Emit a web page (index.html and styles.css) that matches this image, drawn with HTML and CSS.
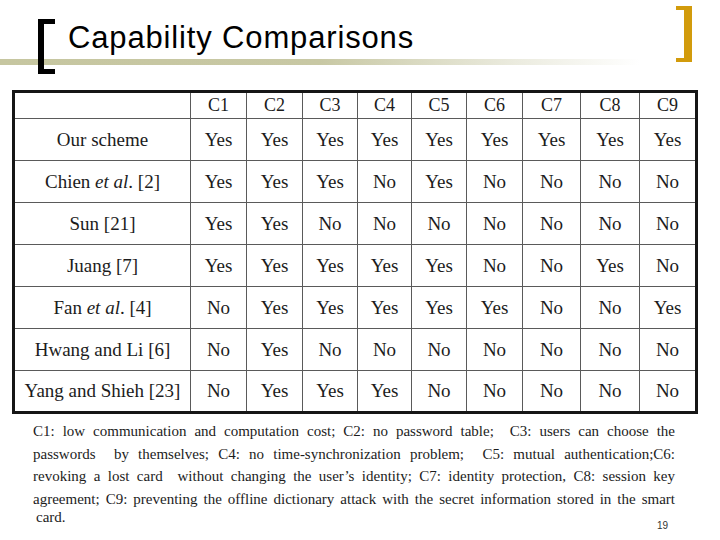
FILE: index.html
```html
<!DOCTYPE html>
<html lang="en">
<head>
<meta charset="utf-8">
<title>Capability Comparisons</title>
<link rel="stylesheet" href="styles.css">
</head>
<body>
<div class="slide">
  <header class="title-bar">
    <span class="br-left"></span>
    <h1 class="title">Capability Comparisons</h1>
    <span class="br-right"></span>
  </header>

  <table class="cmp">
    <colgroup>
      <col class="c-name"><col class="w56"><col class="w56"><col class="w55"><col class="w54"><col class="w55"><col class="w56"><col class="w58"><col class="w59"><col class="w55">
    </colgroup>
    <thead>
      <tr class="head"><th></th><th>C1</th><th>C2</th><th>C3</th><th>C4</th><th>C5</th><th>C6</th><th>C7</th><th>C8</th><th>C9</th></tr>
    </thead>
    <tbody>
      <tr><td>Our scheme</td><td>Yes</td><td>Yes</td><td>Yes</td><td>Yes</td><td>Yes</td><td>Yes</td><td>Yes</td><td>Yes</td><td>Yes</td></tr>
      <tr><td>Chien <i>et al</i>. [2]</td><td>Yes</td><td>Yes</td><td>Yes</td><td>No</td><td>Yes</td><td>No</td><td>No</td><td>No</td><td>No</td></tr>
      <tr><td>Sun [21]</td><td>Yes</td><td>Yes</td><td>No</td><td>No</td><td>No</td><td>No</td><td>No</td><td>No</td><td>No</td></tr>
      <tr><td>Juang [7]</td><td>Yes</td><td>Yes</td><td>Yes</td><td>Yes</td><td>Yes</td><td>No</td><td>No</td><td>Yes</td><td>No</td></tr>
      <tr><td>Fan <i>et al</i>. [4]</td><td>No</td><td>Yes</td><td>Yes</td><td>Yes</td><td>Yes</td><td>Yes</td><td>No</td><td>No</td><td>Yes</td></tr>
      <tr><td>Hwang and Li [6]</td><td>No</td><td>Yes</td><td>No</td><td>No</td><td>No</td><td>No</td><td>No</td><td>No</td><td>No</td></tr>
      <tr class="last"><td>Yang and Shieh [23]</td><td>No</td><td>Yes</td><td>Yes</td><td>Yes</td><td>No</td><td>No</td><td>No</td><td>No</td><td>No</td></tr>
    </tbody>
  </table>

  <div class="notes">
    <p class="notes-body">C1: low communication and computation cost; C2: no password table;&nbsp; C3: users can choose the<br>passwords&nbsp; by themselves; C4: no time-synchronization problem;&nbsp; C5: mutual authentication;C6:<br>revoking a lost card&nbsp; without changing the user’s identity; C7: identity protection, C8: session key<br>agreement; C9: preventing the offline dictionary attack with the secret information stored in the smart</p>
    <div class="notes-foot">
      <span class="notes-last">card.</span>
      <span class="pageno">19</span>
    </div>
  </div>
</div>
</body>
</html>
```

FILE: styles.css
```css
html, body {
  margin: 0;
  padding: 0;
  background: #ffffff;
}

.slide {
  width: 720px;
  height: 540px;
  overflow: hidden;
  background: #ffffff;
}

/* ---------- title ---------- */
.title-bar {
  height: 90px;
  display: flex;
  align-items: flex-start;
  background-image: linear-gradient(to right, #c6c6a0 0, #c8c8a4 320px, #ecece0 520px, #ffffff 640px);
  background-repeat: no-repeat;
  background-position: 0 59px;
  background-size: 100% 6px;
}

.br-left {
  box-sizing: border-box;
  width: 17px;
  height: 55px;
  margin: 19px 0 0 38px;
  border-left: 6px solid #000;
  border-top: 5px solid #000;
  border-bottom: 5px solid #000;
}

.title {
  margin: 20px 0 0 13px;
  font-family: "Liberation Sans", Arial, sans-serif;
  font-weight: normal;
  font-size: 31px;
  letter-spacing: 0.85px;
  line-height: 36px;
  color: #000;
}

.br-right {
  box-sizing: border-box;
  width: 16px;
  height: 56px;
  margin: 6px 28px 0 auto;
  border-right: 8px solid #d29b0c;
  border-top: 4px solid #d29b0c;
  border-bottom: 4px solid #d29b0c;
}

/* ---------- table ---------- */
.cmp {
  margin-left: 12px;
  width: 686px;
  table-layout: fixed;
  border-collapse: separate;
  border-spacing: 0;
  border: 3px solid #161616;
  font-family: "Liberation Serif", "Times New Roman", serif;
  color: #1c1c1c;
}

.c-name { width: 176px; }
.w54 { width: 54px; }
.w55 { width: 55px; }
.w56 { width: 56px; }
.w58 { width: 58px; }
.w59 { width: 59px; }

.cmp th,
.cmp td {
  box-sizing: border-box;
  padding: 0;
  text-align: center;
  vertical-align: middle;
  border-right: 1px solid #5a5a5a;
  border-bottom: 1px solid #5a5a5a;
  font-weight: normal;
  white-space: nowrap;
}

.cmp th:last-child,
.cmp td:last-child {
  border-right: none;
}

.cmp th {
  font-size: 18px;
}

.cmp td {
  font-size: 19px;
}

.cmp tr.head { height: 26px; }
.cmp tbody tr { height: 42px; }
.cmp tbody tr.last { height: 40px; }
.cmp tbody tr.last td { border-bottom: none; }

/* ---------- notes ---------- */
.notes {
  margin: 6px 0 0 33px;
  width: 642px;
  font-family: "Liberation Serif", "Times New Roman", serif;
  font-size: 15px;
  color: #1c1c1c;
}

.notes-body {
  margin: 0;
  line-height: 22.5px;
  word-spacing: -1.5px;
  text-align: justify;
  text-align-last: justify;
}

.notes-foot {
  display: flex;
  justify-content: space-between;
  align-items: flex-end;
  margin-top: -4px;
}

.notes-last {
  line-height: 22px;
  padding-left: 3px;
}

.pageno {
  font-family: "Liberation Sans", Arial, sans-serif;
  font-size: 10px;
  line-height: 12px;
  color: #333;
  margin-right: 7px;
  margin-bottom: -4px;
}
```
